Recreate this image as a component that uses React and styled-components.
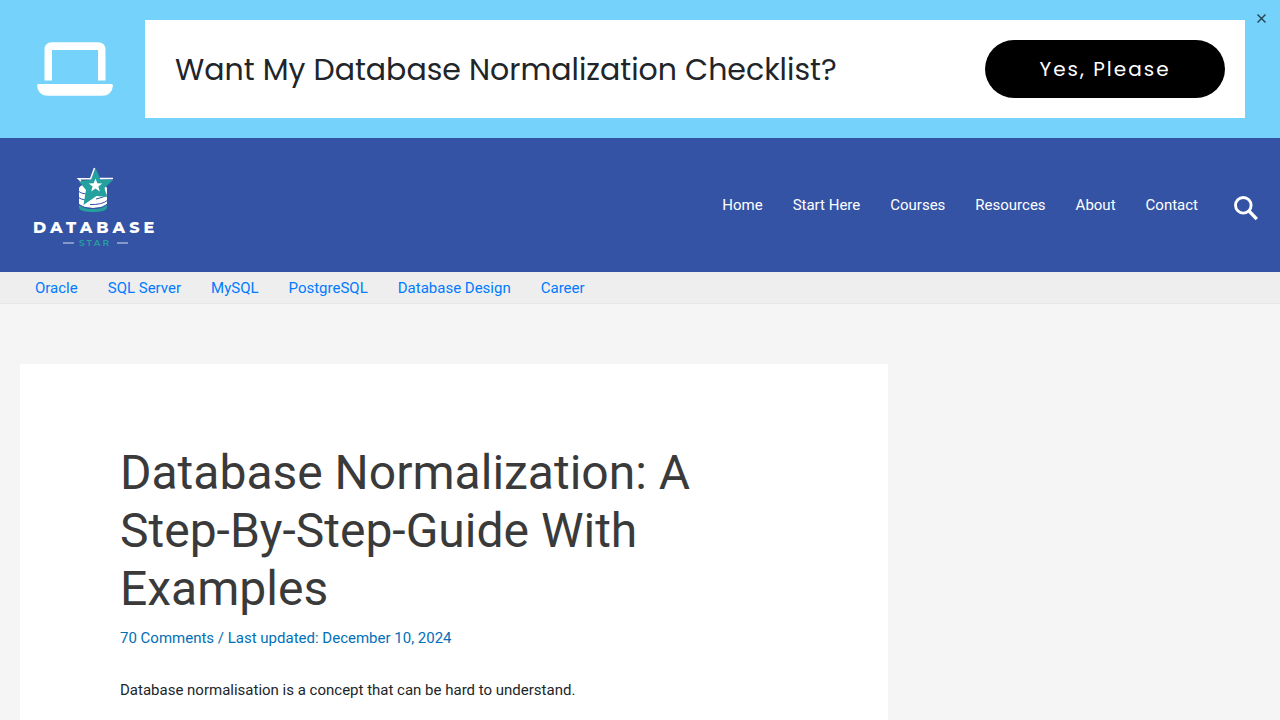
import React from "react";
import styled, { createGlobalStyle } from "styled-components";

const GlobalStyle = createGlobalStyle`
  *, *::before, *::after { box-sizing: border-box; }
  body {
    margin: 0;
    background: #f5f5f5;
    color: #212529;
    font-family: Roboto, "Liberation Sans", sans-serif;
    font-size: 15px;
    line-height: 24px;
  }
  a { color: inherit; text-decoration: none; }
  svg { display: block; }
`;

const Site = styled.div`
  display: flex;
  flex-direction: column;
  min-height: 100vh;
`;

const Banner = styled.aside`
  position: relative;
  display: flex;
  align-items: center;
  gap: 32px;
  padding: 20px 35px 20px 37px;
  background: #74d2fb;
  font-family: Poppins, "Open Sans", sans-serif;
`;

const BannerPanel = styled.div`
  flex: 1;
  display: flex;
  align-items: center;
  justify-content: space-between;
  padding: 20px 20px 20px 30px;
  background: #fff;
`;

const BannerTitle = styled.p`
  margin: 0;
  font-size: 30px;
  line-height: 45px;
  color: #212529;
`;

const BannerButton = styled.button`
  width: 240px;
  height: 58px;
  padding: 0;
  border: 0;
  border-radius: 30px;
  background: #000;
  color: #fff;
  font-family: inherit;
  font-size: 20px;
  letter-spacing: 2px;
  cursor: pointer;
`;

const IconButton = styled.button`
  padding: 0;
  border: 0;
  background: none;
  color: inherit;
  cursor: pointer;
`;

const CloseButton = styled(IconButton)`
  position: absolute;
  top: 14px;
  right: 14px;
  color: #26424f;
`;

const Header = styled.header`
  display: flex;
  align-items: center;
  min-height: 134px;
  padding: 0 22px 0 30px;
  background: #3453a5;
  color: #fff;
`;

const HomeLink = styled.a`
  padding-top: 4px;
`;

const MainNav = styled.nav`
  display: flex;
  gap: 30px;
  margin-left: auto;
`;

const SearchButton = styled(IconButton)`
  margin-left: 36px;
  padding-top: 6px;
`;

const TopicNav = styled.nav`
  display: flex;
  gap: 30px;
  padding: 4px 35px 3px;
  border-bottom: 1px solid #e7e7e7;
  background: #eee;
  color: #007bff;
`;

const Page = styled.main`
  flex: 1;
  display: grid;
  grid-template-columns: 7fr 3fr;
  padding: 60px 20px 0;
`;

const Article = styled.article`
  padding: 80px 100px 0;
  background: #fff;
`;

const Title = styled.h1`
  margin: 0;
  font-size: 48px;
  line-height: 58px;
  font-weight: 400;
  color: #3a3a3a;
`;

const Meta = styled.div`
  margin: 8px 0 28px;
  color: #0170b9;
`;

const Paragraph = styled.p`
  margin: 0 0 16px;
`;

const LogoWord = styled.text`
  font-family: Montserrat, Inter, sans-serif;
  font-size: 16px;
  font-weight: 800;
  letter-spacing: 4px;
  fill: #fff;
`;

const LogoSubword = styled.text`
  font-family: Montserrat, Inter, sans-serif;
  font-size: 9px;
  font-weight: 600;
  letter-spacing: 2px;
  fill: #24a19f;
`;

const LaptopIcon = () => (
  <svg width="76" height="54" viewBox="0 0 76 54" fill="#fff" aria-hidden="true">
    <path d="M7.5 38.5V8Q7.5 .3 15 .3H61Q68.5 .3 68.5 8V38.5H61V8H15V38.5Z" />
    <path d="M1.5 42H74.5Q76 42 76 43.5Q75 53.8 65 53.8H11Q1 53.8 0 43.5Q0 42 1.5 42Z" />
  </svg>
);

const CloseIcon = () => (
  <svg width="9" height="9" viewBox="0 0 9 9" stroke="currentColor" strokeWidth="1.4" aria-hidden="true">
    <path d="M.5 .5L8.5 8.5M8.5 .5L.5 8.5" />
  </svg>
);

const SearchIcon = () => (
  <svg width="24" height="25" viewBox="0 0 24 25" fill="none" stroke="currentColor" aria-hidden="true">
    <circle cx="9.3" cy="9.3" r="7.8" strokeWidth="2.9" />
    <path d="M15 15L22.8 23.2" strokeWidth="3.3" />
  </svg>
);

const Logo = () => (
  <svg width="140" height="86" viewBox="0 0 140 86" role="img" aria-label="Database Star">
    <path d="M49 24Q50 20 63 19Q76 20 77 24V40Q75 44 63 44Q51 44 49 40Z" fill="#fff" />
    <path d="M49 41Q54 45 63 45Q72 45 77 41V44Q76 48 63 48Q50 48 49 44Z" fill="#24a19f" />
    <path
      d="M48 27Q51 29.5 56 30M48 33Q51 35.5 55 36M66 35Q73 34 78 30M60 40.5Q72 41 78 36M49 40.5Q54 44.5 63 44.5Q72 44.5 77 40.5"
      fill="none"
      stroke="#3453a5"
      strokeWidth="1"
    />
    <path
      d="M65.5 4L70.5 15L83 16L74.5 24L77 33L66.5 32L53.5 41L56 26L48.5 17L60.5 16Z"
      fill="#24a19f"
    />
    <path d="M64.5 4L60.6 14.8H48.5L51 17M70 14.6H83" fill="none" stroke="#fff" strokeWidth="1.5" />
    <path
      d="M65.5 14.5L67.3 19.2L72.2 19.4L68.4 22.5L69.8 27.4L65.5 24.6L61.2 27.4L62.6 22.5L58.8 19.4L63.7 19.2Z"
      fill="#fff"
    />
    <LogoWord x="3" y="69">DATABASE</LogoWord>
    <LogoSubword x="49" y="82">STAR</LogoSubword>
    <path d="M33 79H44M87 79H98" stroke="#d5ddf0" strokeWidth="1.2" />
  </svg>
);

const mainLinks = ["Home", "Start Here", "Courses", "Resources", "About", "Contact"];
const topicLinks = ["Oracle", "SQL Server", "MySQL", "PostgreSQL", "Database Design", "Career"];

export default function App() {
  return (
    <Site>
      <GlobalStyle />
      <Banner>
        <LaptopIcon />
        <BannerPanel>
          <BannerTitle>Want My Database Normalization Checklist?</BannerTitle>
          <BannerButton type="button">Yes, Please</BannerButton>
        </BannerPanel>
        <CloseButton type="button" aria-label="Close">
          <CloseIcon />
        </CloseButton>
      </Banner>
      <Header>
        <HomeLink href="#home" aria-label="Database Star home">
          <Logo />
        </HomeLink>
        <MainNav aria-label="Main">
          {mainLinks.map((label) => (
            <a key={label} href="#main">{label}</a>
          ))}
        </MainNav>
        <SearchButton type="button" aria-label="Search">
          <SearchIcon />
        </SearchButton>
      </Header>
      <TopicNav aria-label="Topics">
        {topicLinks.map((label) => (
          <a key={label} href="#topic">{label}</a>
        ))}
      </TopicNav>
      <Page>
        <Article>
          <Title>Database Normalization: A Step-By-Step-Guide With Examples</Title>
          <Meta>
            <a href="#comments">70 Comments</a> / Last updated: December 10, 2024
          </Meta>
          <Paragraph>Database normalisation is a concept that can be hard to understand.</Paragraph>
        </Article>
      </Page>
    </Site>
  );
}
